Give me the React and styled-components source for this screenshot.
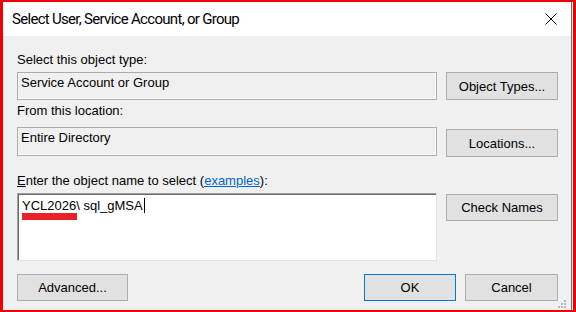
import React from "react";
import styled, { createGlobalStyle } from "styled-components";

const Global = createGlobalStyle`
  html, body { margin: 0; padding: 0; background: #fff; }
  * { box-sizing: border-box; }
`;

const Frame = styled.div`
  width: 576px;
  height: 312px;
  border-style: solid;
  border-color: #f00000;
  border-width: 2px 3px 2px 3px;
  display: flex;
  background: #fff;
`;

const Window = styled.div`
  flex: 1;
  display: flex;
  flex-direction: column;
  border-right: 1px solid #707070;
  margin-right: 1px;
  min-width: 0;
`;

const TitleBar = styled.div`
  height: 34px;
  flex: none;
  background: #fff;
  display: flex;
  align-items: center;
  padding-left: 9px;
`;

const Title = styled.div`
  flex: 1;
  font-family: Roboto, "Liberation Sans", sans-serif;
  font-size: 15px;
  letter-spacing: -0.7px;
  line-height: 17px;
  color: #000;
`;

const CloseButton = styled.div`
  width: 40px;
  height: 34px;
  display: flex;
  align-items: center;
  justify-content: center;
`;

const Body = styled.div`
  position: relative;
  flex: 1;
  background: #f0f0f0;
  padding: 16px 13px 0 14px;
  font-family: "Liberation Sans", Arial, sans-serif;
  font-size: 13px;
  color: #000;
`;

const Label = styled.div`
  line-height: 15px;
  height: 15px;
  margin-top: ${(p) => p.$mt || 0}px;
  white-space: nowrap;
`;

const Mnemonic = styled.span`
  text-decoration: underline;
`;

const Link = styled.span`
  color: #0066cc;
  text-decoration: underline;
`;

const Row = styled.div`
  display: grid;
  grid-template-columns: 420px 112px;
  column-gap: 9px;
  align-items: start;
  margin-top: ${(p) => p.$mt || 0}px;
`;

const Field = styled.div`
  height: ${(p) => p.$h}px;
  background: #f0f0f0;
  border: 1px solid #adadad;
  box-shadow: inset -1px -1px 0 #ffffff;
  padding: 2px 3px;
  line-height: 15px;
  white-space: nowrap;
`;

const NameBox = styled.div`
  position: relative;
  height: 68px;
  background: #fff;
  border: 1px solid #a0a0a0;
  border-right-color: #e3e3e3;
  border-bottom-color: #e3e3e3;
  box-shadow: inset 1px 1px 0 #696969;
  padding: 4px 4px;
  line-height: 15px;
  white-space: nowrap;
`;

const Caret = styled.span`
  display: inline-block;
  width: 1px;
  height: 15px;
  background: #000;
  vertical-align: top;
  margin-left: 1px;
`;

const Redact = styled.div`
  position: absolute;
  left: 4px;
  top: 19px;
  width: 55px;
  height: 7px;
  background: #e8222a;
`;

const Button = styled.div`
  width: ${(p) => p.$w || 112}px;
  height: ${(p) => p.$h || 28}px;
  margin-top: ${(p) => p.$mt || 0}px;
  background: #e1e1e1;
  border: 1px solid ${(p) => (p.$default ? "#0078d7" : "#adadad")};
  display: flex;
  align-items: center;
  justify-content: center;
  line-height: 15px;
  white-space: nowrap;
`;

const Footer = styled.div`
  display: flex;
  align-items: center;
  gap: 9px;
  margin-top: 13px;
`;

const Spacer = styled.div`
  flex: 1;
`;

const Grip = styled.svg`
  position: absolute;
  right: 4px;
  bottom: 1px;
`;

export default function App() {
  return (
    <>
      <Global />
      <Frame>
        <Window>
          <TitleBar>
            <Title>Select User, Service Account, or Group</Title>
            <CloseButton>
              <svg width="12" height="12" viewBox="0 0 12 12">
                <path d="M0.5 0.5 L11.5 11.5 M11.5 0.5 L0.5 11.5" stroke="#000" strokeWidth="1" fill="none" />
              </svg>
            </CloseButton>
          </TitleBar>
          <Body>
            <Label>Select this object type:</Label>
            <Row $mt={5}>
              <Field $h={28}>Service Account or Group</Field>
              <Button $h={28}>Object Types...</Button>
            </Row>
            <Label $mt={3}>From this location:</Label>
            <Row $mt={9}>
              <Field $h={29}>Entire Directory</Field>
              <Button $h={28} $mt={2}>Locations...</Button>
            </Row>
            <Label $mt={16}>
              <Mnemonic>E</Mnemonic>nter the object name to select (<Link>examples</Link>):
            </Label>
            <Row $mt={5}>
              <NameBox>
                YCL2026\ sql_gMSA<Caret />
                <Redact />
              </NameBox>
              <Button $h={27} $mt={1}>Check Names</Button>
            </Row>
            <Footer>
              <Button $w={111} $h={27}>Advanced...</Button>
              <Spacer />
              <Button $w={92} $h={27} $default>OK</Button>
              <Button $w={93} $h={27}>Cancel</Button>
            </Footer>
            <Grip width="9" height="9" viewBox="0 0 9 9">
              <rect x="6" y="0" width="2" height="2" fill="#b8b8b8" />
              <rect x="3" y="3" width="2" height="2" fill="#b8b8b8" />
              <rect x="6" y="3" width="2" height="2" fill="#b8b8b8" />
              <rect x="0" y="6" width="2" height="2" fill="#b8b8b8" />
              <rect x="3" y="6" width="2" height="2" fill="#b8b8b8" />
              <rect x="6" y="6" width="2" height="2" fill="#b8b8b8" />
            </Grip>
          </Body>
        </Window>
      </Frame>
    </>
  );
}
